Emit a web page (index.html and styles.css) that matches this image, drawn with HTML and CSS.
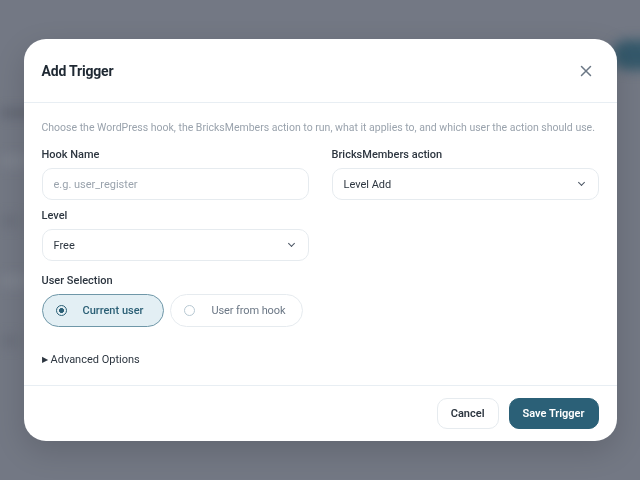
FILE: index.html
```html
<!DOCTYPE html>
<html>
<head>
    <link rel="stylesheet" href="styles.css">
</head>
<body>
    <div class="backdrop">
        <div class="page">
            <div class="page-bar"></div>
            <div class="page-line"></div>
            <div class="page-line short"></div>
            <div class="page-line"></div>
            <div class="page-line short"></div>
            <div class="page-blob"></div>
        </div>
    </div>
    <div class="overlay">
        <div class="modal">
            <div class="modal-header">
                <h2>Add Trigger</h2>
                <button class="close" aria-label="Close">
                    <svg width="12" height="12" viewBox="0 0 12 12"><path d="M1.5 1.5l9 9M10.5 1.5l-9 9" stroke="#6b7785" stroke-width="1.5" stroke-linecap="round"/></svg>
                </button>
            </div>
            <div class="modal-body">
                <p class="intro">Choose the WordPress hook, the BricksMembers action to run, what it applies to, and which user the action should use.</p>
                <div class="grid">
                    <div class="field">
                        <label>Hook Name</label>
                        <input type="text" placeholder="e.g. user_register">
                    </div>
                    <div class="field">
                        <label>BricksMembers action</label>
                        <div class="select">Level Add<span class="chev"></span></div>
                    </div>
                    <div class="field">
                        <label>Level</label>
                        <div class="select">Free<span class="chev"></span></div>
                    </div>
                </div>
                <div class="field users">
                    <label>User Selection</label>
                    <div class="pills">
                        <div class="pill active"><span class="radio"></span>Current user</div>
                        <div class="pill"><span class="radio"></span>User from hook</div>
                    </div>
                </div>
                <div class="advanced"><span class="tri">&#9654;</span>Advanced Options</div>
            </div>
            <div class="modal-footer">
                <button class="btn">Cancel</button>
                <button class="btn primary">Save Trigger</button>
            </div>
        </div>
    </div>
</body>
</html>
```
FILE: styles.css
```css
body {
    margin: 0;
    font-family: Roboto, "Noto Sans", sans-serif;
    background-color: #737884;
    color: #1f2933;
    width: 640px;
    height: 480px;
    overflow: hidden;
}
.backdrop {
    position: absolute;
    inset: 0;
    filter: blur(6px);
}
.page {
    padding: 110px 0 0 0;
}
.page-bar {
    height: 6px;
    width: 40px;
    background: #5a5f6a;
    margin-bottom: 40px;
}
.page-line {
    height: 10px;
    width: 30px;
    background: #7d828d;
    margin-bottom: 50px;
}
.page-line.short {
    width: 20px;
    background: #6a6f7a;
}
.page-blob {
    position: absolute;
    left: 612px;
    top: 40px;
    width: 60px;
    height: 30px;
    border-radius: 15px;
    background: #34586a;
}
.overlay {
    position: absolute;
    inset: 0;
    display: flex;
    align-items: center;
    justify-content: center;
}
.modal {
    width: 593px;
    background: #fff;
    border-radius: 22px;
    box-shadow: 0 10px 30px rgba(0, 0, 0, 0.15);
    overflow: hidden;
}
.modal-header {
    height: 63px;
    padding: 0 18px;
    display: flex;
    align-items: center;
    justify-content: space-between;
    border-bottom: 1px solid #e8eef3;
}
.modal-header h2 {
    margin: 0;
    font-size: 14px;
    font-weight: 700;
    color: #1f2933;
    letter-spacing: -0.2px;
}
.close {
    border: none;
    background: none;
    padding: 0;
    width: 12px;
    height: 12px;
    margin-right: 7px;
    display: flex;
}
.modal-body {
    padding: 18px 18px 19px;
    line-height: 13px;
}
.intro {
    margin: 0 0 14px;
    font-size: 10.5px;
    color: #9aa3ad;
    white-space: nowrap;
}
.grid {
    display: grid;
    grid-template-columns: 1fr 1fr;
    column-gap: 23px;
}
.field {
    margin-bottom: 9px;
}
.field label {
    display: block;
    font-size: 11px;
    font-weight: 500;
    color: #2d3640;
    margin-bottom: 7px;
}
.field input, .select {
    box-sizing: border-box;
    width: 100%;
    height: 32px;
    border: 1px solid #e6ebef;
    border-radius: 10px;
    padding: 0 11px;
    font-family: inherit;
    font-size: 11px;
    color: #2d3640;
    background: #fff;
    outline: none;
}
.field input::placeholder {
    color: #9aa3ad;
}
.select {
    display: flex;
    align-items: center;
    justify-content: space-between;
}
.chev {
    width: 4px;
    height: 4px;
    border-right: 1.5px solid #4b5563;
    border-bottom: 1.5px solid #4b5563;
    transform: rotate(45deg);
    margin: -3px 3px 0 0;
}
.field.users {
    margin-top: 4px;
    margin-bottom: 0;
}
.pills {
    display: flex;
    gap: 6px;
}
.pill {
    box-sizing: border-box;
    height: 33px;
    border: 1px solid #e6ebef;
    border-radius: 17px;
    display: flex;
    align-items: center;
    padding: 0 20px 0 13px;
    font-size: 11px;
    color: #6b7785;
}
.pill:not(.active) {
    padding-right: 17px;
    letter-spacing: -0.1px;
}
.pill.active {
    background: #e3eff4;
    border-color: #6f97a8;
    color: #2b5f75;
    font-weight: 500;
}
.radio {
    box-sizing: border-box;
    width: 11px;
    height: 11px;
    border-radius: 50%;
    border: 1px solid #b8c9d3;
    margin-right: 16px;
}
.pill.active .radio {
    border: 1.5px solid #2b5f75;
    background: radial-gradient(circle, #2b5f75 2.2px, transparent 2.6px);
}
.advanced {
    margin-top: 26px;
    font-size: 11px;
    color: #2d3640;
}
.tri {
    font-size: 8px;
    margin-right: 3px;
    vertical-align: 1px;
}
.modal-footer {
    border-top: 1px solid #e8eef3;
    padding: 12px 18px 12px;
    display: flex;
    justify-content: flex-end;
    gap: 10px;
}
.btn {
    height: 31px;
    padding: 0 13px;
    border: 1px solid #e6ebef;
    border-radius: 10px;
    background: #fff;
    font-family: inherit;
    font-size: 11px;
    font-weight: 600;
    color: #2d3640;
}
.btn.primary {
    background: #2b6077;
    border-color: #2b6077;
    color: #fff;
}
```
